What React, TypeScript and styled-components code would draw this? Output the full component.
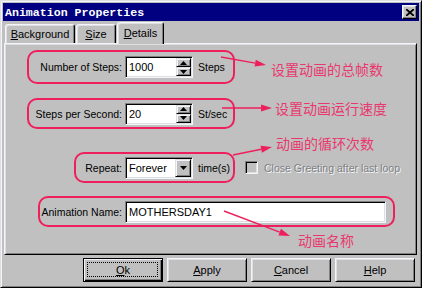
import styled, { createGlobalStyle } from 'styled-components'

// Win95 style "Animation Properties" dialog with red callouts drawn over it

const FACE = '#c0c0c0'
const HI = '#f2f6fc'
const LIGHT = '#dfdfdf'
const SHADOW = '#808080'
const DARK = '#000000'
const RED = '#ee1f5c'
const NOTE = '#e8386f'

const GlobalStyle = createGlobalStyle`
  html, body { margin: 0; padding: 0; background: ${FACE}; }
  body { font-family: "Liberation Sans", Arial, sans-serif; font-size: 10.5px; color: #000; }
`

const Window = styled.div`
  box-sizing: border-box;
  width: 422px;
  height: 288px;
  background: ${FACE};
  border: 1px solid;
  border-color: ${LIGHT} ${DARK} ${DARK} ${LIGHT};
  box-shadow: inset 1px 1px ${HI}, inset -1px -1px ${SHADOW};
  padding: 2px;
  display: flex;
  flex-direction: column;
`

const TitleBar = styled.div`
  height: 18px;
  background: #000080;
  display: flex;
  align-items: center;
  justify-content: space-between;
  padding: 0 2px 0 2px;
`

const Title = styled.span`
  color: #fff;
  font-family: "Liberation Mono", "DejaVu Sans Mono", monospace;
  font-weight: bold;
  font-size: 11.6px;
`

const CloseButton = styled.div`
  box-sizing: border-box;
  width: 15px;
  height: 14px;
  background: ${FACE};
  border: 1px solid;
  border-color: ${HI} ${DARK} ${DARK} ${HI};
  box-shadow: inset -1px -1px ${SHADOW}, inset 1px 1px ${LIGHT};
  display: flex;
  align-items: center;
  justify-content: center;
`

const TabStrip = styled.div`
  height: 22px;
  display: flex;
  align-items: flex-end;
  padding-left: 2px;
`

const Tab = styled.div<{ $active?: boolean; $w: number }>`
  box-sizing: border-box;
  position: relative;
  z-index: ${p => (p.$active ? 2 : 0)};
  width: ${p => p.$w}px;
  height: ${p => (p.$active ? 22 : 19)}px;
  margin-right: 1px;
  margin-bottom: ${p => (p.$active ? -1 : 0)}px;
  background: ${FACE};
  border: 1px solid;
  border-bottom: none;
  border-color: ${HI} ${DARK} transparent ${HI};
  border-radius: 3px 3px 0 0;
  box-shadow: inset 1px 1px ${LIGHT}, inset -1px 0 ${SHADOW};
  display: flex;
  align-items: center;
  justify-content: center;
  padding-bottom: ${p => (p.$active ? 2 : 0)}px;
  font-size: 11px;
`

const Panel = styled.div`
  position: relative;
  box-sizing: border-box;
  height: 212px;
  margin: 0 2px 0 1px;
  border: 1px solid;
  border-color: ${HI} ${DARK} ${DARK} ${HI};
  box-shadow: inset 1px 1px ${LIGHT}, inset -1px -1px ${SHADOW};
  padding: 1px;
  display: flex;
  flex-direction: column;
`

const Row = styled.div<{ $top: number; $left: number }>`
  display: flex;
  align-items: flex-start;
  margin-top: ${p => p.$top}px;
  margin-left: ${p => p.$left}px;
`

const Callout = styled.div<{ $w: number; $h: number }>`
  box-sizing: border-box;
  width: ${p => p.$w}px;
  height: ${p => p.$h}px;
  border: 2px solid ${RED};
  border-radius: 10px;
  display: flex;
  align-items: center;
  flex-shrink: 0;
`

const Label = styled.span<{ $w: number }>`
  box-sizing: border-box;
  width: ${p => p.$w}px;
  padding-right: 3px;
  text-align: right;
  white-space: nowrap;
`

const Field = styled.div<{ $w: number }>`
  box-sizing: border-box;
  width: ${p => p.$w}px;
  height: 22px;
  background: #fff;
  border: 1px solid;
  border-color: ${SHADOW} ${HI} ${HI} ${SHADOW};
  box-shadow: inset 1px 1px ${DARK}, inset -1px -1px ${LIGHT};
  padding: 1px;
  display: flex;
  align-items: center;
  flex-shrink: 0;
  font-size: 11px;
`

const FieldText = styled.span`
  flex: 1;
  padding-left: 2px;
  white-space: nowrap;
`

const Suffix = styled.span`
  margin-left: 5px;
  white-space: nowrap;
`

const Spinner = styled.div`
  display: flex;
  flex-direction: column;
`

const RaisedButton = styled.div<{ $w: number; $h: number }>`
  box-sizing: border-box;
  width: ${p => p.$w}px;
  height: ${p => p.$h}px;
  background: ${FACE};
  border: 1px solid;
  border-color: ${LIGHT} ${DARK} ${DARK} ${LIGHT};
  box-shadow: inset 1px 1px ${HI}, inset -1px -1px ${SHADOW};
  display: flex;
  align-items: center;
  justify-content: center;
`

const Note = styled.div<{ $top: number; $left: number }>`
  margin-top: ${p => p.$top}px;
  margin-left: ${p => p.$left}px;
  height: 16px;
  line-height: 16px;
  color: ${NOTE};
  font-family: "Noto Sans CJK SC", "Noto Sans CJK JP", sans-serif;
  font-size: 14px;
  white-space: nowrap;
`

const CheckBox = styled.div`
  box-sizing: border-box;
  width: 13px;
  height: 13px;
  margin-left: 10px;
  background: ${FACE};
  border: 1px solid;
  border-color: ${SHADOW} ${HI} ${HI} ${SHADOW};
  box-shadow: inset 1px 1px ${DARK}, inset -1px -1px ${LIGHT};
  flex-shrink: 0;
`

const Disabled = styled.span`
  margin-left: 6px;
  color: ${SHADOW};
  text-shadow: 1px 1px ${HI};
  white-space: nowrap;
`

const CheckRow = styled.div`
  display: flex;
  align-items: center;
  height: 31px;
`

const Overlay = styled.svg`
  position: absolute;
  left: 0;
  top: 0;
  width: 100%;
  height: 100%;
  overflow: visible;
  pointer-events: none;
`

const ButtonRow = styled.div`
  display: flex;
  justify-content: flex-end;
  gap: 4px;
  margin-top: 3px;
  padding-right: 4px;
`

const PushButton = styled.div<{ $default?: boolean }>`
  position: relative;
  box-sizing: border-box;
  width: 80px;
  height: 24px;
  background: ${FACE};
  border: 1px solid;
  border-color: ${p => (p.$default ? `${DARK}` : `${HI} ${DARK} ${DARK} ${HI}`)};
  box-shadow: ${p =>
    p.$default
      ? `inset 1px 1px ${HI}, inset -1px -1px ${DARK}, inset -2px -2px ${SHADOW}`
      : `inset 1px 1px ${LIGHT}, inset -1px -1px ${SHADOW}`};
  display: flex;
  align-items: center;
  justify-content: center;
  font-size: 11px;
`

const FocusRing = styled.span`
  position: absolute;
  inset: 3px 4px 4px 3px;
  border: 1px dotted ${DARK};
`

const Arrow = ({ x1, y1, x2, y2 }: { x1: number; y1: number; x2: number; y2: number }) => {
  const a = Math.atan2(y2 - y1, x2 - x1)
  const len = 11
  const half = 3.5
  const bx = x2 - len * Math.cos(a)
  const by = y2 - len * Math.sin(a)
  const px = -Math.sin(a) * half
  const py = Math.cos(a) * half
  return (
    <g>
      <line x1={x1} y1={y1} x2={bx} y2={by} stroke={RED} strokeWidth={1.4} />
      <polygon points={`${x2},${y2} ${bx + px},${by + py} ${bx - px},${by - py}`} fill={RED} />
    </g>
  )
}

const arrows = [
  { x1: 216, y1: 13, x2: 261, y2: 21 },
  { x1: 217, y1: 64, x2: 267, y2: 64 },
  { x1: 228, y1: 111, x2: 267, y2: 103 },
  { x1: 219, y1: 167, x2: 285, y2: 192 },
]

const UpTri = () => (
  <svg width="7" height="4" viewBox="0 0 7 4"><polygon points="3.5,0 7,4 0,4" fill="#000" /></svg>
)
const DownTri = ({ w = 7 }: { w?: number }) => (
  <svg width={w} height={Math.ceil(w / 2)} viewBox={`0 0 ${w} ${Math.ceil(w / 2)}`}>
    <polygon points={`0,0 ${w},0 ${w / 2},${Math.ceil(w / 2)}`} fill="#000" />
  </svg>
)

const SpinBox = ({ value }: { value: string }) => (
  <Field $w={68}>
    <FieldText>{value}</FieldText>
    <Spinner>
      <RaisedButton $w={15} $h={9}><UpTri /></RaisedButton>
      <RaisedButton $w={15} $h={9}><DownTri /></RaisedButton>
    </Spinner>
  </Field>
)

const App = () => {
  return (
    <>
      <GlobalStyle />
      <Window>
        <TitleBar>
          <Title>Animation Properties</Title>
          <CloseButton>
            <svg width="8" height="7" viewBox="0 0 8 7">
              <path d="M0 0 L8 7 M8 0 L0 7" stroke="#000" strokeWidth="1.8" />
            </svg>
          </CloseButton>
        </TitleBar>

        <TabStrip>
          <Tab $w={70}><span><u>B</u>ackground</span></Tab>
          <Tab $w={40}><span><u>S</u>ize</span></Tab>
          <Tab $w={47} $active><span><u>D</u>etails</span></Tab>
        </TabStrip>

        <Panel>
          <Row $top={5} $left={21}>
            <Callout $w={208} $h={34}>
              <Label $w={96}>Number of Steps:</Label>
              <SpinBox value="1000" />
              <Suffix>Steps</Suffix>
            </Callout>
            <Note $top={11} $left={36}>设置动画的总帧数</Note>
          </Row>

          <Row $top={14} $left={21}>
            <Callout $w={208} $h={31}>
              <Label $w={96}>Steps per Second:</Label>
              <SpinBox value="20" />
              <Suffix>St/sec</Suffix>
            </Callout>
            <Note $top={2} $left={40}>设置动画运行速度</Note>
          </Row>

          <Note $top={6} $left={270}>动画的循环次数</Note>

          <Row $top={1} $left={68}>
            <Callout $w={161} $h={31}>
              <Label $w={49}>Repeat:</Label>
              <Field $w={68}>
                <FieldText>Forever</FieldText>
                <RaisedButton $w={16} $h={18}><DownTri /></RaisedButton>
              </Field>
              <Suffix>time(s)</Suffix>
            </Callout>
            <CheckRow>
              <CheckBox />
              <Disabled>Close Greeting after last loop</Disabled>
            </CheckRow>
          </Row>

          <Row $top={13} $left={32}>
            <Callout $w={357} $h={31}>
              <Label $w={85}>Animation Name:</Label>
              <Field $w={261}>
                <FieldText>MOTHERSDAY1</FieldText>
              </Field>
            </Callout>
          </Row>

          <Note $top={5} $left={292}>动画名称</Note>

          <Overlay>
            {arrows.map((a, i) => (
              <Arrow key={i} {...a} />
            ))}
          </Overlay>
        </Panel>

        <ButtonRow>
          <PushButton $default>
            <FocusRing />
            <span><u>O</u>k</span>
          </PushButton>
          <PushButton><span><u>A</u>pply</span></PushButton>
          <PushButton><span><u>C</u>ancel</span></PushButton>
          <PushButton><span><u>H</u>elp</span></PushButton>
        </ButtonRow>
      </Window>
    </>
  )
}

export default App
